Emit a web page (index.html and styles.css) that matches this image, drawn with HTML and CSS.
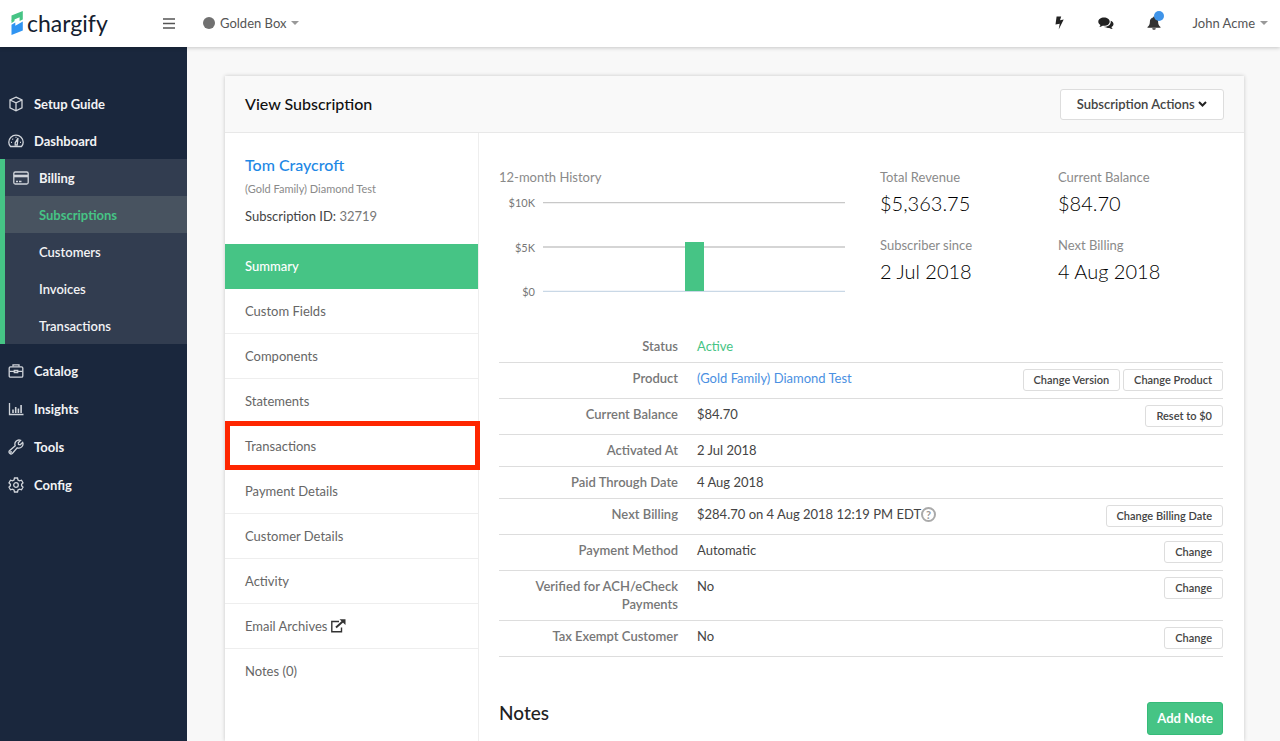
FILE: index.html
```html
<!DOCTYPE html>
<html lang="en">
<head>
<meta charset="utf-8">
<title>View Subscription</title>
<link rel="stylesheet" href="styles.css">
</head>
<body>
<div class="app">
  <header class="topbar">
    <a class="logo" href="#">
      <svg class="logo-mark" viewBox="0 0 12 24" aria-hidden="true">
        <path d="M.5 4.500 11.800 0v8.600L8.600 10V6.200L.5 9.800z" fill="#46c485"/>
        <path d="M.5 9v3.300L3.500 10V8z" fill="#46c485"/>
        <path d="M.5 13.800l3.800-2.300v3.200l7.500-4.200v9L.5 24z" fill="#2f94f2"/>
      </svg>
      <span class="logo-text">chargify</span>
    </a>
    <button class="icon-btn menu-btn" type="button" aria-label="Toggle menu">
      <svg width="12" height="11" viewBox="0 0 12 11"><path d="M0 1h12M0 5.500h12M0 10h12" stroke="#555" stroke-width="1.300"/></svg>
    </button>
    <button class="site-btn" type="button"><span class="site-dot"></span>Golden Box<span class="caret"></span></button>
    <nav class="top-actions">
      <button class="icon-btn" type="button" aria-label="Quick actions">
        <svg width="9" height="14" viewBox="0 0 9 14"><path d="M1.600.4h4.600L5 4.200l3.700-.7L3.700 13.600 4.700 7.700l-4.200.8z" fill="#222"/></svg>
      </button>
      <button class="icon-btn chat-btn" type="button" aria-label="Messages">
        <svg width="16" height="13" viewBox="0 0 16 13"><path d="M6 .6c3.200 0 5.700 1.800 5.700 4.100S9.200 8.800 6 8.800c-.5 0-.9 0-1.400-.1-.9.700-2 1.100-3.300 1.200.6-.6 1-1.200 1.100-2C1.100 7.200.3 6 .3 4.700.3 2.400 2.800.6 6 .6z" fill="#222"/><path d="M12.600 3.800c1.700.6 2.900 1.800 2.900 3.300 0 1.300-.8 2.300-2.100 3 .2.800.6 1.400 1.300 2-1.300-.1-2.500-.5-3.400-1.200-1.900.3-3.900-.1-5.200-1.100 3.800-.1 6.700-2.100 6.700-5.100 0-.3-.1-.6-.2-.9z" fill="#222"/></svg>
      </button>
      <button class="icon-btn bell-btn" type="button" aria-label="Notifications">
        <svg width="14" height="14" viewBox="0 0 14 14"><path d="M7 .5c.6 0 .9.400.9.900 2 .4 3.200 2 3.200 4 0 2.700.7 4.300 2.400 5.600v.8H.5V11c1.700-1.300 2.400-2.900 2.400-5.600 0-2 1.200-3.600 3.200-4 0-.5.3-.9.900-.9zM5.200 12.200h3.600a1.800 1.600 0 0 1-3.600 0z" fill="#333"/></svg>
        <span class="badge"></span>
      </button>
      <button class="user-btn" type="button">John Acme<span class="caret"></span></button>
    </nav>
  </header>

  <div class="body">
    <nav class="sidebar" aria-label="Main">
      <a class="nav-item" href="#">
        <svg viewBox="0 0 16 16"><path d="M8 1.200l6 2.700v8L8 14.800l-6-2.900v-8zM2 4l6 2.900L14 4M8 6.900v7.800"/></svg>Setup Guide</a>
      <a class="nav-item" href="#">
        <svg viewBox="0 0 16 16"><path d="M2.500 13.500C1.400 12.400.8 11 .8 9.300a7.200 7.200 0 0 1 14.400 0c0 1.700-.6 3.100-1.700 4.200zM8 3.800v1M3 9.300h1M12 9.300h1M4.400 5.800l.7.700"/><path d="M7.200 12V9.800L10 5 9.200 12z"/></svg>Dashboard</a>
      <div class="nav-group">
        <a class="nav-item" href="#">
          <svg viewBox="0 0 16 16"><rect x=".8" y="2" width="14.400" height="12" rx="1.500"/><path d="M1 6h14" stroke-width="2.600"/><path d="M3 11.500h2M6 11.500h2.500"/></svg>Billing</a>
        <a class="sub-item current" href="#">Subscriptions</a>
        <a class="sub-item" href="#">Customers</a>
        <a class="sub-item" href="#">Invoices</a>
        <a class="sub-item" href="#">Transactions</a>
      </div>
      <div class="nav-more">
        <a class="nav-item" href="#">
          <svg viewBox="0 0 16 16"><rect x="1.200" y="3.800" width="13.600" height="10.400" rx="1.300"/><path d="M5 3.500V1.800h6v1.700M1.500 8.300H6M10 8.300h4.500M6.300 7.500h3.400v2H6.300z"/></svg>Catalog</a>
        <a class="nav-item" href="#">
          <svg viewBox="0 0 16 16"><path d="M1.500 2v11.500H15.500"/><path d="M5 8.500v3.500M7.700 6v6M10.400 7.500V12M13.100 4v8" stroke-width="1.600"/></svg>Insights</a>
        <a class="nav-item" href="#">
          <svg viewBox="0 0 16 16"><path d="M12.600 1.300a4.200 4.200 0 0 0-5.400 5.500L1.500 11.700a2 2 0 0 0 2.800 2.800l4.900-5.700a4.200 4.200 0 0 0 5.500-5.400L12.200 5.700l-1.700-.2-.2-1.700z"/><circle cx="3" cy="13" r=".4"/></svg>Tools</a>
        <a class="nav-item" href="#">
          <svg viewBox="0 0 16 16"><path d="M6.500 1h3l.5 2 1.500.8 2-.6 1.500 2.600L13.600 7.200v1.600L15 10.200l-1.500 2.600-2-.6-1.500.8-.5 2h-3L6 13l-1.500-.8-2 .6L1 10.200l1.400-1.400V7.200L1 5.800l1.500-2.600 2 .6L6 3z"/><circle cx="8" cy="8" r="2.300"/></svg>Config</a>
      </div>
    </nav>

    <main class="content">
      <section class="card">
        <header class="card-head">
          <h1>View Subscription</h1>
          <button class="btn btn-lg" type="button">Subscription Actions
            <svg width="9" height="8" viewBox="0 0 9 8"><path d="M1 1l3.500 3.500L8 1" fill="none" stroke="#222" stroke-width="2"/></svg></button>
        </header>
        <div class="card-body">
          <aside class="side">
            <div class="profile">
              <a class="profile-name" href="#">Tom Craycroft</a>
              <p class="profile-plan">(Gold Family) Diamond Test</p>
              <p class="profile-id">Subscription ID: <span>32719</span></p>
            </div>
            <nav class="tabs" aria-label="Subscription">
              <a class="tab selected" href="#">Summary</a>
              <a class="tab" href="#">Custom Fields</a>
              <a class="tab" href="#">Components</a>
              <a class="tab" href="#">Statements</a>
              <a class="tab marked" href="#">Transactions</a>
              <a class="tab" href="#">Payment Details</a>
              <a class="tab" href="#">Customer Details</a>
              <a class="tab" href="#">Activity</a>
              <a class="tab" href="#">Email Archives<svg width="16" height="14" viewBox="0 0 16 14"><path d="M9 2.500H1.800v10.300h9.700V8.500" fill="none" stroke="#333" stroke-width="1.400"/><path d="M6 8.500l7-6.200" stroke="#333" stroke-width="2"/><path d="M9.500.3h6v5.600z" fill="#333"/></svg></a>
              <a class="tab" href="#">Notes (0)</a>
            </nav>
          </aside>

          <div class="detail">
            <div class="overview">
              <div class="history">
                <h2 class="label">12-month History</h2>
                <div class="chart">
                  <div class="axis"><span>$10K</span><span>$5K</span><span>$0</span></div>
                  <svg class="plot" viewBox="0 0 302 90" preserveAspectRatio="none" role="img" aria-label="Monthly revenue">
                    <path d="M0 .5h302M0 45h302" stroke="#c8c8c8" stroke-width="1.500"/>
                    <path d="M0 89.500h302" stroke="#c9d8e6" stroke-width="1.500"/>
                    <rect x="142" y="40" width="19" height="49" fill="#46c485"/>
                  </svg>
                </div>
              </div>
              <dl class="stats">
                <div><dt class="label">Total Revenue</dt><dd>$5,363.75</dd></div>
                <div><dt class="label">Current Balance</dt><dd>$84.70</dd></div>
                <div><dt class="label">Subscriber since</dt><dd>2 Jul 2018</dd></div>
                <div><dt class="label">Next Billing</dt><dd>4 Aug 2018</dd></div>
              </dl>
            </div>

            <table class="facts">
              <tr><th scope="row">Status</th><td class="active">Active</td><td class="ops"></td></tr>
              <tr><th scope="row">Product</th><td><a href="#">(Gold Family) Diamond Test</a></td><td class="ops"><div><button class="btn" type="button">Change Version</button><button class="btn" type="button">Change Product</button></div></td></tr>
              <tr><th scope="row">Current Balance</th><td>$84.70</td><td class="ops"><div><button class="btn" type="button">Reset to $0</button></div></td></tr>
              <tr><th scope="row">Activated At</th><td>2 Jul 2018</td><td class="ops"></td></tr>
              <tr><th scope="row">Paid Through Date</th><td>4 Aug 2018</td><td class="ops"></td></tr>
              <tr><th scope="row">Next Billing</th><td>$284.70 on 4 Aug 2018 12:19 PM EDT<span class="help">?</span></td><td class="ops"><div><button class="btn" type="button">Change Billing Date</button></div></td></tr>
              <tr><th scope="row">Payment Method</th><td>Automatic</td><td class="ops"><div><button class="btn" type="button">Change</button></div></td></tr>
              <tr><th scope="row">Verified for ACH/eCheck Payments</th><td>No</td><td class="ops"><div><button class="btn" type="button">Change</button></div></td></tr>
              <tr><th scope="row">Tax Exempt Customer</th><td>No</td><td class="ops"><div><button class="btn" type="button">Change</button></div></td></tr>
            </table>

            <div class="notes">
              <h2>Notes</h2>
              <button class="btn-primary" type="button">Add Note</button>
            </div>
          </div>
        </div>
      </section>
    </main>
  </div>
</div>
</body>
</html>
```
FILE: styles.css
```css
* { box-sizing: border-box; }
body {
  margin: 0;
  font: 13px/18px Lato, "Liberation Sans", sans-serif;
  color: #444;
  background: #f8f8f8;
}
a { color: #4a90e2; text-decoration: none; }
h1, h2, p, dl, dd { margin: 0; }
button { font-family: inherit; cursor: pointer; }
.app { display: flex; flex-direction: column; min-height: 100vh; }

/* Top bar */
.topbar {
  display: flex;
  align-items: center;
  height: 47px;
  padding: 0 12px 1px 11px;
  background: #fff;
  box-shadow: 0 1px 4px rgba(0, 0, 0, .2);
  position: relative;
  z-index: 1;
}
.logo { display: flex; align-items: center; width: 151px; gap: 4px; }
.logo-mark { width: 12px; height: 24px; }
.logo-text { font-size: 23px; line-height: 28px; color: #14202e; }
.icon-btn, .site-btn, .user-btn {
  display: flex;
  align-items: center;
  padding: 0;
  border: 0;
  background: none;
}
.site-btn, .user-btn { font-size: 13px; line-height: 18px; color: #555; }
.menu-btn { margin: 0 28px 0 1px; }
.site-dot { width: 12px; height: 12px; margin-right: 5px; border-radius: 50%; background: #707070; }
.caret { margin-left: 5px; border: 4px solid transparent; border-top-color: #999; border-bottom: 0; }
.top-actions { display: flex; align-items: center; margin-left: auto; }
.chat-btn { margin-left: 34px; }
.bell-btn { margin: 0 32px 0 33px; position: relative; }
.badge {
  position: absolute;
  top: -5px;
  right: -3px;
  width: 10px;
  height: 10px;
  border-radius: 50%;
  background: #3f94e9;
}

.body { display: flex; flex: 1; }

/* Sidebar */
.sidebar { flex: 0 0 187px; padding-top: 38px; background: #1a273d; }
.nav-item {
  display: flex;
  align-items: center;
  height: 37px;
  padding-left: 8px;
  gap: 10px;
  font-size: 13px;
  font-weight: 700;
  color: #f2f3f5;
}
.nav-item svg { width: 16px; height: 16px; fill: none; stroke: #d0d4da; stroke-width: 1.3; }
.nav-group { border-left: 5px solid #46c485; background: #323d50; margin-bottom: 8px; }
.sub-item {
  display: flex;
  align-items: center;
  height: 37px;
  padding-left: 34px;
  font-size: 13px;
  font-weight: 600;
  color: #f2f3f5;
}
.sub-item.current { background: #485360; color: #46c485; font-weight: 700; }
.nav-more { display: flex; flex-direction: column; gap: 1px; }

/* Card */
.content { display: flex; flex: 1; min-width: 0; padding: 29px 36px 0 38px; }
.card { display: flex; flex: 1; flex-direction: column; background: #fff; box-shadow: 0 0 4px rgba(0, 0, 0, .2); }
.card-head {
  display: flex;
  align-items: center;
  justify-content: space-between;
  height: 57px;
  padding: 0 20px;
  background: #f9f9f9;
  border-bottom: 1px solid #e8e8e8;
}
.card-head h1 { font-size: 16px; line-height: 20px; font-weight: 500; color: #111; }
.card-body { display: flex; flex: 1; }
.side { flex: 0 0 254px; border-right: 1px solid #eee; }
.profile { padding: 22px 20px 18px; height: 111px; }
.profile-name { display: block; font-size: 16px; line-height: 20px; font-weight: 500; color: #1e88e5; }
.profile-plan { margin-top: 6px; font-size: 11px; line-height: 16px; color: #8a8a8a; }
.profile-id { margin-top: 10px; color: #444; }
.profile-id span { color: #777; }
.tab {
  display: flex;
  align-items: center;
  gap: 3px;
  height: 45px;
  padding: 0 20px;
  border-bottom: 1px solid #eee;
  color: #666;
}
.tab:last-child { border-bottom-color: transparent; }
.tab.selected { background: #46c485; border-color: #46c485; color: #fff; font-weight: 500; }
.tab.marked { position: relative; }
.tab.marked::after {
  content: "";
  position: absolute;
  inset: -3px -2px -2px 0;
  border: 5px solid #fe2600;
}

/* Overview */
.detail { flex: 1; min-width: 0; padding: 35px 21px 0 20px; }
.overview { display: grid; grid-template-columns: 381px 1fr; height: 163px; }
.label { font-size: 13px; line-height: 18px; font-weight: 400; color: #8a8a8a; }
.chart { display: flex; gap: 8px; margin-top: 16px; padding-right: 35px; }
.axis {
  display: flex;
  flex-direction: column;
  justify-content: space-between;
  width: 36px;
  height: 102px;
  margin: -6px 0;
  text-align: right;
  font-size: 11px;
  line-height: 13px;
  color: #777;
}
.plot { flex: 1; min-width: 0; height: 90px; }
.stats { display: grid; grid-template-columns: 178px 1fr; grid-auto-rows: 68px; }
.stats dd { margin-top: 4px; font-size: 20px; line-height: 26px; font-weight: 300; color: #000; }

/* Facts */
.facts { width: 100%; border-collapse: collapse; }
.facts th, .facts td {
  padding: 6px 0 7px;
  border-bottom: 1px solid #ddd;
  text-align: left;
  vertical-align: top;
  font-weight: 400;
}
.facts th { width: 179px; padding-left: 20px; text-align: right; font-weight: 600; color: #777; }
.facts th + td { padding-left: 19px; }
.facts .active { color: #46c485; }
.ops div { display: flex; justify-content: flex-end; gap: 3px; }
.help {
  display: inline-block;
  width: 15px;
  height: 15px;
  border: 2px solid #aaa;
  border-radius: 50%;
  text-align: center;
  font-size: 11px;
  line-height: 11px;
  font-weight: 700;
  color: #999;
}
.btn {
  height: 22px;
  padding: 0 10px;
  border: 1px solid #ddd;
  border-radius: 3px;
  background: #fff;
  font-size: 11px;
  line-height: 18px;
  font-weight: 600;
  color: #444;
}
.btn-lg { height: 31px; padding: 0 16px; font-size: 13px; }

/* Notes */
.notes { display: flex; align-items: center; justify-content: space-between; margin-top: 44px; }
.notes h2 { margin-bottom: 10px; font-size: 19px; line-height: 24px; font-weight: 500; color: #222; }
.btn-primary {
  height: 33px;
  padding: 0 9px;
  border: 1px solid #36bb79;
  border-radius: 3px;
  background: #46c485;
  font-size: 13px;
  font-weight: 700;
  color: #fff;
}
```
